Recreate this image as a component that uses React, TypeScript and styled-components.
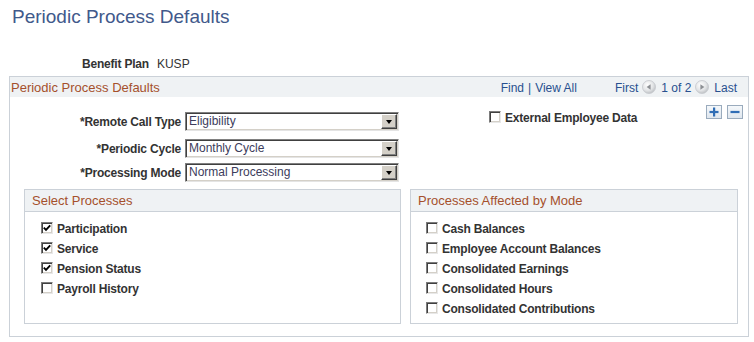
import React from 'react';
import styled, { createGlobalStyle } from 'styled-components';

const GlobalStyle = createGlobalStyle`
  html, body { margin: 0; padding: 0; background: #ffffff; }
  body {
    font-family: "Liberation Sans", Arial, sans-serif;
    font-size: 12px;
    color: #333333;
  }
`;

const Page = styled.div`
  width: 754px;
  height: 342px;
  box-sizing: border-box;
  padding-top: 6px;
  overflow: hidden;
`;

const Title = styled.h1`
  margin: 0 0 0 12px;
  font-size: 19px;
  font-weight: normal;
  line-height: 22px;
  color: #41598b;
`;

const KeyRow = styled.div`
  display: flex;
  gap: 8px;
  margin: 29px 0 5px 82px;
  line-height: 14px;
`;

const KeyLabel = styled.span`
  font-weight: bold;
  letter-spacing: -0.2px;
`;

const KeyValue = styled.span``;

const Panel = styled.section`
  margin: 0 5px 0 9px;
  border: 1px solid #cbd1d8;
  padding-bottom: 12px;
`;

const PanelHeader = styled.div`
  display: flex;
  align-items: flex-start;
  height: 20px;
  background: #eff2f4;
  padding: 0 11px 0 1px;
`;

const HeaderTitle = styled.div`
  font-size: 13px;
  line-height: 21px;
  color: #a5502c;
`;

const Nav = styled.div`
  margin-left: auto;
  display: flex;
  align-items: center;
  padding-top: 3px;
  line-height: 16px;
  color: #28508f;
`;

const NavLink = styled.span<{ $gap?: number }>`
  margin-left: ${(p) => p.$gap ?? 0}px;
  color: #28508f;
`;

const NavIcon = styled.svg<{ $gap?: number }>`
  display: block;
  margin-left: ${(p) => p.$gap ?? 0}px;
  margin-top: -3px;
`;

const TopArea = styled.div`
  display: flex;
  align-items: flex-start;
  padding: 8px 5px 0 0;
`;

const Form = styled.div`
  margin-top: 7px;
  display: flex;
  flex-direction: column;
`;

const FieldRow = styled.div<{ $top: number }>`
  display: flex;
  align-items: center;
  gap: 4px;
  margin-top: ${(p) => p.$top}px;
`;

const FieldLabel = styled.label`
  width: 171px;
  text-align: right;
  font-weight: bold;
  letter-spacing: -0.2px;
  white-space: nowrap;
`;

const SelectBox = styled.div`
  width: 214px;
  height: 19px;
  box-sizing: border-box;
  border: 1px solid;
  border-color: #808080 #e4e4e4 #e4e4e4 #808080;
  box-shadow: inset 1px 1px 0 #404040, inset -1px -1px 0 #d4d0c8;
  display: flex;
  align-items: center;
  padding: 1px 1px 1px 3px;
  background: #ffffff;
`;

const SelectText = styled.span`
  flex: 1;
  line-height: 15px;
  color: #3c3c5c;
`;

const DropButton = styled.span`
  width: 16px;
  height: 15px;
  box-sizing: border-box;
  background: #d4d0c8;
  border: 1px solid;
  border-color: #ffffff #404040 #404040 #ffffff;
  box-shadow: inset -1px -1px 0 #808080;
  display: flex;
  align-items: center;
  justify-content: center;
`;

const Arrow = styled.span`
  width: 0;
  height: 0;
  border-left: 3.5px solid transparent;
  border-right: 3.5px solid transparent;
  border-top: 4px solid #000000;
  margin-top: 1px;
`;

const ExternalCheck = styled.div`
  margin: 6px 0 0 90px;
`;

const Tools = styled.div`
  margin-left: auto;
  display: flex;
  gap: 5px;
`;

const ToolButton = styled.span`
  width: 16px;
  height: 14px;
  box-sizing: border-box;
  border: 1px solid #9aabbd;
  background: linear-gradient(#f5f8fb, #dfe6ee);
  display: flex;
  align-items: center;
  justify-content: center;
`;

const CheckRow = styled.div<{ $height?: number }>`
  display: flex;
  align-items: center;
  height: ${(p) => p.$height ?? 20}px;
  gap: 4px;
`;

const Box = styled.span`
  width: 12px;
  height: 12px;
  box-sizing: border-box;
  border: 1px solid;
  border-color: #7c7c7c #e8e8e8 #e8e8e8 #7c7c7c;
  box-shadow: inset 1px 1px 0 #404040, inset -1px -1px 0 #d4d0c8;
  background: #ffffff;
  display: flex;
  align-items: center;
  justify-content: center;
  flex: none;
`;

const CheckLabel = styled.span`
  font-weight: bold;
  letter-spacing: -0.2px;
  white-space: nowrap;
  padding-top: 1px;
`;

const SubRow = styled.div`
  display: flex;
  gap: 9px;
  margin-top: 7px;
  padding: 0 10px 0 14px;
`;

const SubBox = styled.div<{ $width?: number }>`
  border: 1px solid #cbd1d8;
  ${(p) => (p.$width ? `flex: 0 0 ${p.$width}px;` : 'flex: 1;')}
  box-sizing: border-box;
`;

const SubHeader = styled.div`
  height: 21px;
  line-height: 21px;
  background: #eff2f4;
  border-bottom: 1px solid #cbd1d8;
  padding-left: 7px;
  font-size: 13px;
  color: #a5502c;
`;

const CheckList = styled.div<{ $indent: number }>`
  padding: 6px 0 5px ${(p) => p.$indent}px;
`;

const CheckMark = () => (
  <svg width="8" height="8" viewBox="0 0 8 8">
    <path d="M0.8 3.6 L3 5.8 L7.2 1.4" fill="none" stroke="#000" strokeWidth="1.9" />
  </svg>
);

const Check = ({ label, checked }: { label: string; checked?: boolean }) => (
  <CheckRow>
    <Box>{checked && <CheckMark />}</Box>
    <CheckLabel>{label}</CheckLabel>
  </CheckRow>
);

const Select = ({ value }: { value: string }) => (
  <SelectBox>
    <SelectText>{value}</SelectText>
    <DropButton>
      <Arrow />
    </DropButton>
  </SelectBox>
);

const CircleArrow = ({ dir, gap }: { dir: 'left' | 'right'; gap: number }) => (
  <NavIcon $gap={gap} width="14" height="14" viewBox="0 0 14 14">
    <defs>
      <radialGradient id={`g-${dir}`} cx="40%" cy="35%" r="70%">
        <stop offset="0%" stopColor="#ffffff" />
        <stop offset="60%" stopColor="#e2e4e6" />
        <stop offset="100%" stopColor="#b9bcc0" />
      </radialGradient>
    </defs>
    <circle cx="7" cy="7" r="6.5" fill={`url(#g-${dir})`} stroke="#c4c7cb" strokeWidth="0.8" />
    {dir === 'left' ? (
      <path d="M4.6 7 L8.6 4.3 L8.6 9.7 Z" fill="#8d9094" />
    ) : (
      <path d="M9.4 7 L5.4 4.3 L5.4 9.7 Z" fill="#8d9094" />
    )}
  </NavIcon>
);

const PlusIcon = () => (
  <svg width="10" height="10" viewBox="0 0 10 10">
    <rect x="4" y="0.5" width="2.2" height="9" fill="#2f6db5" />
    <rect x="0.5" y="3.9" width="9" height="2.2" fill="#2f6db5" />
  </svg>
);

const MinusIcon = () => (
  <svg width="10" height="10" viewBox="0 0 10 10">
    <rect x="0.5" y="3.9" width="9" height="2.2" fill="#2f6db5" />
  </svg>
);

export default function App() {
  return (
    <>
      <GlobalStyle />
      <Page>
        <Title>Periodic Process Defaults</Title>
        <KeyRow>
          <KeyLabel>Benefit Plan</KeyLabel>
          <KeyValue>KUSP</KeyValue>
        </KeyRow>
        <Panel>
          <PanelHeader>
            <HeaderTitle>Periodic Process Defaults</HeaderTitle>
            <Nav>
              <NavLink>Find</NavLink>
              <NavLink $gap={4}>|</NavLink>
              <NavLink $gap={4}>View All</NavLink>
              <NavLink $gap={38}>First</NavLink>
              <CircleArrow dir="left" gap={4} />
              <NavLink $gap={5}>1 of 2</NavLink>
              <CircleArrow dir="right" gap={4} />
              <NavLink $gap={5}>Last</NavLink>
            </Nav>
          </PanelHeader>
          <TopArea>
            <Form>
              <FieldRow $top={0}>
                <FieldLabel>*Remote Call Type</FieldLabel>
                <Select value="Eligibility" />
              </FieldRow>
              <FieldRow $top={8}>
                <FieldLabel>*Periodic Cycle</FieldLabel>
                <Select value="Monthly Cycle" />
              </FieldRow>
              <FieldRow $top={5}>
                <FieldLabel>*Processing Mode</FieldLabel>
                <Select value="Normal Processing" />
              </FieldRow>
            </Form>
            <ExternalCheck>
              <CheckRow $height={12}>
                <Box />
                <CheckLabel>External Employee Data</CheckLabel>
              </CheckRow>
            </ExternalCheck>
            <Tools>
              <ToolButton>
                <PlusIcon />
              </ToolButton>
              <ToolButton>
                <MinusIcon />
              </ToolButton>
            </Tools>
          </TopArea>
          <SubRow>
            <SubBox $width={377}>
              <SubHeader>Select Processes</SubHeader>
              <CheckList $indent={16}>
                <Check label="Participation" checked />
                <Check label="Service" checked />
                <Check label="Pension Status" checked />
                <Check label="Payroll History" />
              </CheckList>
            </SubBox>
            <SubBox>
              <SubHeader>Processes Affected by Mode</SubHeader>
              <CheckList $indent={15}>
                <Check label="Cash Balances" />
                <Check label="Employee Account Balances" />
                <Check label="Consolidated Earnings" />
                <Check label="Consolidated Hours" />
                <Check label="Consolidated Contributions" />
              </CheckList>
            </SubBox>
          </SubRow>
        </Panel>
      </Page>
    </>
  );
}
